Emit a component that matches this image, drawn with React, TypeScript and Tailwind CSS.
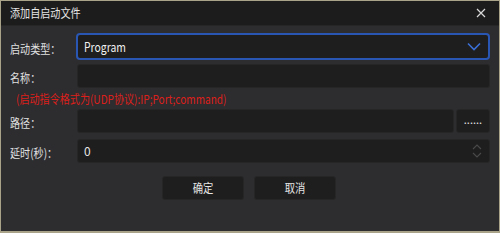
import React from "react";

export default function App() {
  const font = { fontFamily: '"Microsoft YaHei", "Noto Sans CJK SC", "Noto Sans", sans-serif' };
  const inputCls =
    "h-[24px] flex-1 rounded-[3px] bg-[#1e1e1e] border border-[#262626] flex items-center px-[6px] text-[12px] text-[#e6e6e6]";
  const labelCls = "inline-block text-[12px] scale-x-[0.84] origin-left whitespace-nowrap";
  const btnCls =
    "w-[82px] h-[24px] rounded-[3px] bg-[#1e1e1e] border border-[#262626] flex items-center justify-center text-[12px] text-[#e6e6e6]";
  return (
    <div
      className="w-[500px] h-[233px] border border-[#a8a389] border-b-2 bg-[#2d2d30] flex flex-col text-[#e0e0e0]"
      style={font}
    >
      <div className="h-[25px] bg-[#1c1c1c] flex items-center justify-between pl-[9px] pr-[12px] border-b border-[#262626]">
        <span className="inline-block text-[12px] text-[#e6e6e6] scale-x-[0.84] origin-left">添加自启动文件</span>
        <svg width="10" height="10" viewBox="0 0 10 10" className="mr-[1px]">
          <path d="M1 1 L9 9 M9 1 L1 9" stroke="#d8d8d8" strokeWidth="1.2" />
        </svg>
      </div>
      <div className="flex flex-col px-[9px] pt-[7px]">
        <div className="flex items-center">
          <div className="w-[66px]">
            <span className={labelCls}>启动类型：</span>
          </div>
          <div className="h-[27px] flex-1 rounded-[4px] bg-[#1e1e1e] border-2 border-[#2a56b3] flex items-center justify-between pl-[6px] pr-[7px]">
            <span className="inline-block text-[13px] text-[#f0f0f0] scale-x-[0.8] origin-left">Program</span>
            <svg width="14" height="9" viewBox="0 0 14 9">
              <path d="M1 1.5 L7 7.5 L13 1.5" stroke="#3b6fd6" strokeWidth="1.6" fill="none" />
            </svg>
          </div>
        </div>
        <div className="flex items-center mt-[4px]">
          <div className="w-[67px]">
            <span className={labelCls}>名称：</span>
          </div>
          <div className={inputCls}></div>
        </div>
        <div className="h-[21px] flex items-center pl-[6px]">
          <span className="inline-block text-[12px] text-[#dd1f1a] scale-x-[0.84] origin-left whitespace-nowrap">
            (启动指令格式为(UDP协议):IP;Port;command)
          </span>
        </div>
        <div className="flex items-center">
          <div className="w-[67px]">
            <span className={labelCls}>路径：</span>
          </div>
          <div className={inputCls}></div>
          <div className="ml-[2px] w-[34px] h-[24px] rounded-[3px] bg-[#1e1e1e] border border-[#262626] flex items-center justify-center text-[11px] text-[#e6e6e6] leading-none pb-[3px]">
            ......
          </div>
        </div>
        <div className="flex items-center mt-[6px]">
          <div className="w-[67px]">
            <span className={labelCls}>延时(秒)：</span>
          </div>
          <div className={inputCls + " justify-between"}>
            <span className="text-[12px]">0</span>
            <svg width="10" height="16" viewBox="0 0 10 16" className="mr-[1px]">
              <path d="M1 6 L5 2 L9 6 M1 10 L5 14 L9 10" stroke="#4a4a4a" strokeWidth="1.1" fill="none" />
            </svg>
          </div>
        </div>
        <div className="flex justify-center gap-[10px] mt-[13px] pr-[2px]">
          <div className={btnCls}>
            <span className="inline-block scale-x-[0.86]">确定</span>
          </div>
          <div className={btnCls}>
            <span className="inline-block scale-x-[0.86]">取消</span>
          </div>
        </div>
      </div>
    </div>
  );
}
